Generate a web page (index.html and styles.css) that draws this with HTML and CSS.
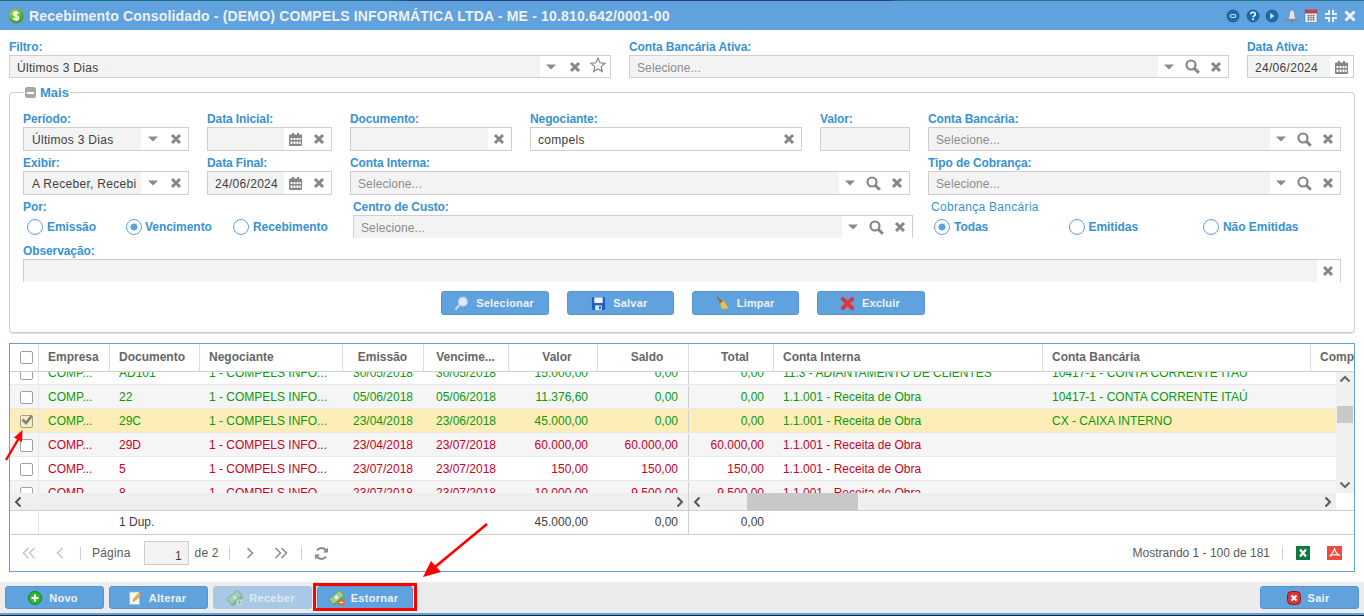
FILE: index.html
```html
<!DOCTYPE html>
<html lang="pt-BR">
<head>
<meta charset="utf-8">
<title>Recebimento Consolidado</title>
<link rel="stylesheet" href="styles.css">
</head>
<body>
<svg class="defs" width="0" height="0">
  <symbol id="x" viewBox="0 0 12 12"><path d="M2 2l8 8M10 2l-8 8" stroke="#868686" stroke-width="3" fill="none"/></symbol>
  <symbol id="caret" viewBox="0 0 10 6"><path d="M0 .5h10L5 5.500z" fill="#8a8a8a"/></symbol>
  <symbol id="search" viewBox="0 0 15 15"><circle cx="6" cy="6" r="4.500" stroke="#868686" stroke-width="2.200" fill="none"/><path d="M9 9l4.800 4.800" stroke="#868686" stroke-width="3"/></symbol>
  <symbol id="cal" viewBox="0 0 13 14"><path d="M0 3.500a1 1 0 0 1 1-1h2V1h2v1.500h3V1h2v1.500h2a1 1 0 0 1 1 1V13a1 1 0 0 1-1 1H1a1 1 0 0 1-1-1z" fill="#868686"/><path d="M1.500 6h2v2h-2zM4.500 6h2v2h-2zM7.500 6h2v2h-2zM10.300 6h1.500v2h-1.500zM1.500 9.500h2v2.500h-2zM4.500 9.500h2v2.500h-2zM7.500 9.500h2v2.500h-2zM10.300 9.500h1.500v2.500h-1.500z" fill="#fff"/></symbol>
  <symbol id="money" viewBox="0 0 18 18"><g transform="rotate(-40 9 9)"><rect x="1" y="7" width="16" height="8" fill="#6ea96a"/><rect x="1" y="4" width="16" height="8" fill="#9ccf93" stroke="#4f8f4f" stroke-width=".8"/><circle cx="9" cy="8" r="2" fill="#e6f4e0"/></g></symbol>
  <symbol id="chev-l" viewBox="0 0 10 12"><path d="M7.500 1.500L3 6l4.500 4.500" fill="none" stroke="#555" stroke-width="2"/></symbol>
  <symbol id="chev-r" viewBox="0 0 10 12"><path d="M2.500 1.500L7 6l-4.500 4.500" fill="none" stroke="#555" stroke-width="2"/></symbol>
  <symbol id="chev-u" viewBox="0 0 12 10"><path d="M1.500 7.500L6 3l4.500 4.500" fill="none" stroke="#666" stroke-width="2"/></symbol>
  <symbol id="chev-d" viewBox="0 0 12 10"><path d="M1.500 2.500L6 7l4.500-4.500" fill="none" stroke="#666" stroke-width="2"/></symbol>
  <symbol id="pg-first" viewBox="0 0 14 12"><path d="M6.500 1L1.500 6l5 5M12.500 1l-5 5 5 5" fill="none" stroke="#c4c4c4" stroke-width="1.500"/></symbol>
  <symbol id="pg-prev" viewBox="0 0 14 12"><path d="M9.500 1l-5 5 5 5" fill="none" stroke="#c4c4c4" stroke-width="1.500"/></symbol>
  <symbol id="pg-next" viewBox="0 0 14 12"><path d="M4.500 1l5 5-5 5" fill="none" stroke="#8a8a8a" stroke-width="1.500"/></symbol>
  <symbol id="pg-last" viewBox="0 0 14 12"><path d="M1.500 1l5 5-5 5M7.500 1l5 5-5 5" fill="none" stroke="#8a8a8a" stroke-width="1.500"/></symbol>
</svg>

<div class="strip"></div>
<header class="titlebar">
  <svg class="title-ico" viewBox="0 0 16 16"><defs><radialGradient id="gg" cx=".4" cy=".3" r=".8"><stop offset="0" stop-color="#a4e05a"/><stop offset="1" stop-color="#2e8b1e"/></radialGradient></defs><circle cx="8" cy="8" r="7.500" fill="url(#gg)"/><path d="M10.600 5.600C10.200 4.700 9.200 4.300 8 4.300c-1.500 0-2.500.7-2.500 1.800 0 2.400 5.200 1.300 5.200 3.800 0 1.100-1.100 1.800-2.700 1.800-1.400 0-2.400-.6-2.800-1.600M8 3v10" fill="none" stroke="#fff" stroke-width="1.500"/></svg>
  <h1 class="title">Recebimento Consolidado - (DEMO) COMPELS INFORMÁTICA LTDA - ME - 10.810.642/0001-00</h1>
  <div class="tools">
    <svg class="tool" viewBox="0 0 14 14"><circle cx="7" cy="7" r="6.500" fill="#1f69a8"/><rect x="4.300" y="5.500" width="5.400" height="3" rx="1.500" fill="none" stroke="#cfe3f5" stroke-width="1.200"/></svg>
    <svg class="tool" viewBox="0 0 14 14"><circle cx="7" cy="7" r="6.500" fill="#1f69a8"/><path d="M4.800 5.300C4.900 4 5.900 3.300 7 3.300c1.300 0 2.300.8 2.300 1.900 0 1.600-2.200 1.600-2.200 3.100" fill="none" stroke="#fff" stroke-width="1.600"/><rect x="6.200" y="9.400" width="1.800" height="1.700" fill="#fff"/></svg>
    <svg class="tool" viewBox="0 0 14 14"><circle cx="7" cy="7" r="6.500" fill="#1f69a8"/><path d="M5.200 4l4.300 3-4.300 3z" fill="#cfe3f5"/></svg>
    <svg class="tool" viewBox="0 0 14 14"><path d="M7 1c.8 0 1 .6 1 1 1.200.5 1.400 1.500 1.500 3 .1 2 .6 3.800 1.500 5H3c.9-1.200 1.400-3 1.500-5 .1-1.500.3-2.500 1.500-3 0-.4.200-1 1-1z" fill="#dfe6ec" stroke="#7f8d99" stroke-width=".6"/><rect x="1" y="10" width="12" height="1.800" rx=".9" fill="#7d8a96"/><circle cx="7" cy="12.700" r="1" fill="#6d7985"/></svg>
    <svg class="tool" viewBox="0 0 14 14"><rect x="1" y=".5" width="12" height="13" fill="#eef1f4" stroke="#6f7a85" stroke-width=".6"/><rect x="1" y=".5" width="12" height="4" fill="#b8434f"/><path d="M3 6.500h8M3 8.500h8M3 10.500h8M4.500 5.500v7M7 5.500v7M9.500 5.500v7" stroke="#7a8896" stroke-width=".8"/></svg>
    <svg class="tool" viewBox="0 0 14 14"><path d="M5 1v4H1M9 1v4h4M5 13V9H1M9 13V9h4" fill="none" stroke="#eaf2fa" stroke-width="2"/></svg>
    <svg class="tool" viewBox="0 0 14 14"><path d="M2.500 2.500l9 9M11.500 2.500l-9 9" stroke="#eaf2fa" stroke-width="3"/></svg>
  </div>
</header>

<main class="content">
  <section class="top-row">
    <div class="fld">
      <label class="lbl">Filtro:</label>
      <div class="inp"><span class="val">Últimos 3 Dias</span><span class="trig"><span class="slot"><svg class="i-caret"><use href="#caret"/></svg></span><span class="slot"><svg class="i-x"><use href="#x"/></svg></span><span class="slot"><svg class="i-star" viewBox="0 0 16 16"><path d="M8 1.200l2 4.600 5 .5-3.800 3.300 1.100 4.900L8 12l-4.300 2.500 1.100-4.900L1 6.300l5-.5z" fill="none" stroke="#868686" stroke-width="1.200"/></svg></span></span></div>
    </div>
    <div class="fld">
      <label class="lbl">Conta Bancária Ativa:</label>
      <div class="inp"><span class="val ph">Selecione...</span><span class="trig"><span class="slot"><svg class="i-caret"><use href="#caret"/></svg></span><span class="slot"><svg class="i-s"><use href="#search"/></svg></span><span class="slot"><svg class="i-x"><use href="#x"/></svg></span></span></div>
    </div>
    <div class="fld">
      <label class="lbl">Data Ativa:</label>
      <div class="inp"><span class="val">24/06/2024</span><span class="trig"><span class="slot"><svg class="i-c"><use href="#cal"/></svg></span></span></div>
    </div>
  </section>

  <fieldset class="more">
    <legend class="more-leg"><span class="minus"></span>Mais</legend>
    <div class="form-row">
      <div class="fld"><label class="lbl">Período:</label><div class="inp tall"><span class="val">Últimos 3 Dias</span><span class="trig"><span class="slot"><svg class="i-caret"><use href="#caret"/></svg></span><span class="slot"><svg class="i-x"><use href="#x"/></svg></span></span></div></div>
      <div class="fld"><label class="lbl">Data Inicial:</label><div class="inp tall"><span class="val"></span><span class="trig"><span class="slot"><svg class="i-c"><use href="#cal"/></svg></span><span class="slot"><svg class="i-x"><use href="#x"/></svg></span></span></div></div>
      <div class="fld"><label class="lbl">Documento:</label><div class="inp tall"><span class="val"></span><span class="trig"><span class="slot"><svg class="i-x"><use href="#x"/></svg></span></span></div></div>
      <div class="fld"><label class="lbl">Negociante:</label><div class="inp tall plain"><span class="val">compels</span><span class="trig"><span class="slot"><svg class="i-x"><use href="#x"/></svg></span></span></div></div>
      <div class="fld"><label class="lbl">Valor:</label><div class="inp tall"><span class="val"></span></div></div>
      <div class="fld"><label class="lbl">Conta Bancária:</label><div class="inp tall"><span class="val ph">Selecione...</span><span class="trig"><span class="slot"><svg class="i-caret"><use href="#caret"/></svg></span><span class="slot"><svg class="i-s"><use href="#search"/></svg></span><span class="slot"><svg class="i-x"><use href="#x"/></svg></span></span></div></div>
    </div>
    <div class="form-row">
      <div class="fld"><label class="lbl">Exibir:</label><div class="inp tall"><span class="val">A Receber, Recebi</span><span class="trig"><span class="slot"><svg class="i-caret"><use href="#caret"/></svg></span><span class="slot"><svg class="i-x"><use href="#x"/></svg></span></span></div></div>
      <div class="fld"><label class="lbl">Data Final:</label><div class="inp tall"><span class="val">24/06/2024</span><span class="trig"><span class="slot"><svg class="i-c"><use href="#cal"/></svg></span><span class="slot"><svg class="i-x"><use href="#x"/></svg></span></span></div></div>
      <div class="fld span3"><label class="lbl">Conta Interna:</label><div class="inp tall"><span class="val ph">Selecione...</span><span class="trig"><span class="slot"><svg class="i-caret"><use href="#caret"/></svg></span><span class="slot"><svg class="i-s"><use href="#search"/></svg></span><span class="slot"><svg class="i-x"><use href="#x"/></svg></span></span></div></div>
      <div class="fld"><label class="lbl">Tipo de Cobrança:</label><div class="inp tall"><span class="val ph">Selecione...</span><span class="trig"><span class="slot"><svg class="i-caret"><use href="#caret"/></svg></span><span class="slot"><svg class="i-s"><use href="#search"/></svg></span><span class="slot"><svg class="i-x"><use href="#x"/></svg></span></span></div></div>
    </div>
    <div class="radio-row">
      <div class="fld">
        <label class="lbl">Por:</label>
        <div class="radios por">
          <span class="radio"><i class="dot"></i>Emissão</span>
          <span class="radio on"><i class="dot"></i>Vencimento</span>
          <span class="radio"><i class="dot"></i>Recebimento</span>
        </div>
      </div>
      <div class="fld"><label class="lbl">Centro de Custo:</label><div class="inp cut"><span class="val ph">Selecione...</span><span class="trig"><span class="slot"><svg class="i-caret"><use href="#caret"/></svg></span><span class="slot"><svg class="i-s"><use href="#search"/></svg></span><span class="slot"><svg class="i-x"><use href="#x"/></svg></span></span></div></div>
      <div class="fld">
        <label class="lbl normal">Cobrança Bancária</label>
        <div class="radios cob">
          <span class="radio on"><i class="dot"></i>Todas</span>
          <span class="radio"><i class="dot"></i>Emitidas</span>
          <span class="radio"><i class="dot"></i>Não Emitidas</span>
        </div>
      </div>
    </div>
    <div class="obs">
      <label class="lbl">Observação:</label>
      <div class="inp cut"><span class="val"></span><span class="trig"><span class="slot"><svg class="i-x"><use href="#x"/></svg></span></span></div>
    </div>
    <div class="actions">
      <button class="btn act" type="button"><svg class="b-ico" viewBox="0 0 16 16"><circle cx="9.500" cy="6" r="4.700" fill="#dcebf7" stroke="#b9cfe0" stroke-width="1.300"/><path d="M6 9.500L1.500 14.500" stroke="#e3d9c4" stroke-width="2.200"/></svg>Selecionar</button>
      <button class="btn act" type="button"><svg class="b-ico" viewBox="0 0 16 16"><rect x="1" y="1" width="14" height="14" rx="1.500" fill="#1f5fc0"/><rect x="3.500" y="1.500" width="9" height="6" fill="#eef4fb"/><rect x="4.500" y="10" width="7" height="5" fill="#dfe5ec"/><rect x="8.500" y="11" width="2" height="3" fill="#1f5fc0"/></svg>Salvar</button>
      <button class="btn act" type="button"><svg class="b-ico" viewBox="0 0 16 16"><path d="M2 1l5 6" stroke="#a5622b" stroke-width="1.500"/><path d="M6 6l3-2 4 7 2 2-7 1-2-3z" fill="#e8c33f"/><path d="M5 7l3.500-2.500" stroke="#c0392b" stroke-width="1.300"/></svg>Limpar</button>
      <button class="btn act" type="button"><svg class="b-ico" viewBox="0 0 16 16"><path d="M3 3l10 10M13 3L3 13" stroke="#e0333b" stroke-width="4.200" stroke-linecap="round"/></svg>Excluir</button>
    </div>
  </fieldset>

  <section class="grid">
    <div class="g-row g-head">
      <div class="cell chk"><i class="box"></i></div>
      <div class="cell">Empresa</div>
      <div class="cell">Documento</div>
      <div class="cell">Negociante</div>
      <div class="cell ctr">Emissão</div>
      <div class="cell ctr">Vencime...</div>
      <div class="cell ctr sh">Valor</div>
      <div class="cell ctr sh">Saldo</div>
      <div class="cell ctr sh">Total</div>
      <div class="cell">Conta Interna</div>
      <div class="cell">Conta Bancária</div>
      <div class="cell comp">Comp</div>
    </div>
    <div class="g-body">
      <div class="rows">
        <div class="g-row row green first">
          <div class="cell chk"><i class="box"></i></div><div class="cell">COMP...</div><div class="cell">AD101</div><div class="cell">1 - COMPELS INFO...</div><div class="cell ctr">30/05/2018</div><div class="cell ctr">30/05/2018</div><div class="cell num">15.000,00</div><div class="cell num">0,00</div><div class="cell num">0,00</div><div class="cell">11.3 - ADIANTAMENTO DE CLIENTES</div><div class="cell">10417-1 - CONTA CORRENTE ITAÚ</div><div class="cell"></div>
        </div>
        <div class="g-row row green alt">
          <div class="cell chk"><i class="box"></i></div><div class="cell">COMP...</div><div class="cell">22</div><div class="cell">1 - COMPELS INFO...</div><div class="cell ctr">05/06/2018</div><div class="cell ctr">05/06/2018</div><div class="cell num">11.376,60</div><div class="cell num">0,00</div><div class="cell num">0,00</div><div class="cell">1.1.001 - Receita de Obra</div><div class="cell">10417-1 - CONTA CORRENTE ITAÚ</div><div class="cell"></div>
        </div>
        <div class="g-row row green sel">
          <div class="cell chk"><i class="box checked"><svg class="tick" viewBox="0 0 14 14"><path d="M2.500 6.500l3.500 3.500 6-7.500" fill="none" stroke="#808080" stroke-width="2.600"/></svg></i></div><div class="cell">COMP...</div><div class="cell">29C</div><div class="cell">1 - COMPELS INFO...</div><div class="cell ctr">23/04/2018</div><div class="cell ctr">23/06/2018</div><div class="cell num">45.000,00</div><div class="cell num">0,00</div><div class="cell num">0,00</div><div class="cell">1.1.001 - Receita de Obra</div><div class="cell">CX - CAIXA INTERNO</div><div class="cell"></div>
        </div>
        <div class="g-row row red alt">
          <div class="cell chk"><i class="box"></i></div><div class="cell">COMP...</div><div class="cell">29D</div><div class="cell">1 - COMPELS INFO...</div><div class="cell ctr">23/04/2018</div><div class="cell ctr">23/07/2018</div><div class="cell num">60.000,00</div><div class="cell num">60.000,00</div><div class="cell num">60.000,00</div><div class="cell">1.1.001 - Receita de Obra</div><div class="cell"></div><div class="cell"></div>
        </div>
        <div class="g-row row red">
          <div class="cell chk"><i class="box"></i></div><div class="cell">COMP...</div><div class="cell">5</div><div class="cell">1 - COMPELS INFO...</div><div class="cell ctr">23/07/2018</div><div class="cell ctr">23/07/2018</div><div class="cell num">150,00</div><div class="cell num">150,00</div><div class="cell num">150,00</div><div class="cell">1.1.001 - Receita de Obra</div><div class="cell"></div><div class="cell"></div>
        </div>
        <div class="g-row row red alt">
          <div class="cell chk"><i class="box"></i></div><div class="cell">COMP...</div><div class="cell">8</div><div class="cell">1 - COMPELS INFO...</div><div class="cell ctr">23/07/2018</div><div class="cell ctr">23/07/2018</div><div class="cell num">10.000,00</div><div class="cell num">9.500,00</div><div class="cell num">9.500,00</div><div class="cell">1.1.001 - Receita de Obra</div><div class="cell"></div><div class="cell"></div>
        </div>
      </div>
      <div class="vscroll">
        <svg class="sc-v"><use href="#chev-u"/></svg>
        <div class="v-thumb"></div>
        <svg class="sc-v"><use href="#chev-d"/></svg>
      </div>
    </div>
    <div class="hbars">
      <div class="hbar locked"><svg class="sc-h"><use href="#chev-l"/></svg><svg class="sc-h"><use href="#chev-r"/></svg></div>
      <div class="hbar free"><svg class="sc-h"><use href="#chev-l"/></svg><div class="h-thumb"></div><svg class="sc-h"><use href="#chev-r"/></svg></div>
      <div class="corner"></div>
    </div>
    <div class="g-row g-sum">
      <div class="cell chk"></div><div class="cell"></div><div class="cell sumtxt">1 Dup.</div><div class="cell"></div><div class="cell"></div><div class="cell"></div><div class="cell num">45.000,00</div><div class="cell num">0,00</div><div class="cell num">0,00</div><div class="cell"></div><div class="cell"></div><div class="cell"></div>
    </div>
    <div class="pager">
      <svg class="pg p1"><use href="#pg-first"/></svg>
      <svg class="pg p2"><use href="#pg-prev"/></svg>
      <i class="sep s1"></i>
      <span class="pg-txt">Página</span>
      <span class="pg-input">1</span>
      <span class="pg-txt">de 2</span>
      <i class="sep s2"></i>
      <svg class="pg p3"><use href="#pg-next"/></svg>
      <svg class="pg p4"><use href="#pg-last"/></svg>
      <i class="sep s3"></i>
      <svg class="pg-r" viewBox="0 0 16 16"><path d="M13.500 6.500A5.800 5.800 0 0 0 3.200 4.600M2.500 9.500a5.800 5.800 0 0 0 10.300 1.900" fill="none" stroke="#8a8a8a" stroke-width="2.200"/><path d="M15 1.500V7H9.500zM1 14.500V9h5.500z" fill="#8a8a8a"/></svg>
      <span class="pg-info">Mostrando 1 - 100 de 181</span>
      <i class="sep s4"></i>
      <svg class="pg-x" viewBox="0 0 14 14"><rect width="14" height="14" fill="#0f7a40"/><path d="M4 3.500l6 7M10 3.500l-6 7" stroke="#fff" stroke-width="2.200"/></svg>
      <svg class="pg-p" viewBox="0 0 15 14"><rect width="15" height="14" fill="#ee4b3c"/><path d="M7.500 2c-.6 3-2.200 6-5 8M7.500 2c.4 3 2.200 6 5.500 7.500M3 10c3-1.500 6-2 9.500-.8" fill="none" stroke="#fff" stroke-width="1.200"/></svg>
    </div>
  </section>
</main>

<footer class="bottom">
  <button class="btn foot" type="button"><svg class="f-ico" viewBox="0 0 14 14"><circle cx="7" cy="7" r="6.500" fill="#2fb52f" stroke="#17801c"/><path d="M7 3.500v7M3.500 7h7" stroke="#fff" stroke-width="2.200"/></svg>Novo</button>
  <button class="btn foot" type="button"><svg class="f-ico" viewBox="0 0 14 14"><rect x="1.500" y="1" width="10" height="12.500" fill="#f8f8f4" stroke="#a9b2ba" stroke-width=".8"/><path d="M5 10.500l1-3 5.500-6 2 2-6 5.500z" fill="#eeb64a" stroke="#b9772a" stroke-width=".6"/></svg>Alterar</button>
  <button class="btn foot off" type="button"><svg class="f-ico wide faded" viewBox="0 0 18 18"><use href="#money"/><circle cx="14" cy="14" r="3.500" fill="#d4e6d0"/><path d="M14 12v4M12 14h4" stroke="#7fae7d" stroke-width="1.300"/></svg>Receber</button>
  <button class="btn foot marked" type="button"><svg class="f-ico wide" viewBox="0 0 18 18"><use href="#money"/><circle cx="14" cy="14" r="3.700" fill="#e8662a"/><path d="M12 14h4" stroke="#fff" stroke-width="1.500"/></svg>Estornar</button>
  <button class="btn foot sair" type="button"><svg class="f-ico" viewBox="0 0 14 14"><rect x=".5" y=".5" width="13" height="13" rx="4" fill="#d9363a" stroke="#8c1a1d"/><path d="M4.500 4.500l5 5M9.500 4.500l-5 5" stroke="#fff" stroke-width="2.200"/></svg>Sair</button>
</footer>
<div class="endline"></div>

<svg class="notes" viewBox="0 0 1364 616">
  <path d="M6 460L19 438" stroke="#f00" stroke-width="2.400"/><path d="M22.500 430L14 437.500 22 442z" fill="#f00"/>
  <path d="M487 524L435 567" stroke="#f00" stroke-width="2.600"/><path d="M423 577L431 561 441 572z" fill="#f00"/>
</svg>
</body>
</html>
```

FILE: styles.css
```css
* { box-sizing: border-box; }
html, body { margin: 0; padding: 0; }
body {
  position: relative;
  width: 1364px;
  height: 616px;
  overflow: hidden;
  display: flex;
  flex-direction: column;
  font: 12px "Liberation Sans", Arial, sans-serif;
  color: #404040;
  background: #fff;
}
.defs { position: absolute; }
.strip {
  height: 1px;
  background: linear-gradient(90deg, #1d6d86 0, #1d6d86 29%, #243d7c 30%, #243d7c 65%, #1c7a8c 66%, #1c7a8c 100%);
  flex: none;
}
.titlebar {
  flex: none;
  height: 29px;
  background: #5fa2dd;
  display: flex;
  align-items: center;
  padding: 0 7px 0 8px;
}
.title-ico { width: 16px; height: 16px; flex: none; margin-right: 5px; }
.title {
  margin: 0;
  font-size: 14px;
  font-weight: 700;
  letter-spacing: .18px;
  color: #f0f0f0;
  white-space: nowrap;
  flex: 1;
}
.tools { display: flex; gap: 5.500px; align-items: center; }
.tool { width: 14px; height: 14px; display: block; }

.content {
  flex: 1;
  min-height: 0;
  padding: 8px 9px 10px 9px;
  display: flex;
  flex-direction: column;
}
.top-row { display: grid; grid-template-columns: 602px 600px 107px; column-gap: 18px; }
.lbl {
  display: block;
  height: 17px;
  padding-top: 1px;
  line-height: 16px;
  color: #3892d3;
  font-weight: 700;
  letter-spacing: -.1px;
  white-space: nowrap;
}
.lbl.normal { font-weight: 400; letter-spacing: .3px; }
.inp {
  height: 23px;
  border: 1px solid #cfcfcf;
  background: #fff;
  display: flex;
  align-items: stretch;
}
.inp.tall { height: 24px; }
.inp.cut { border-bottom: 0; }
.val {
  flex: 1;
  min-width: 0;
  background: #f3f3f3;
  padding: 1px 0 0 7px;
  line-height: 22px;
  letter-spacing: .3px;
  white-space: nowrap;
  overflow: hidden;
}
.form-row .fld:first-child .val { padding-left: 8px; }
.plain .val { background: #fff; }
.ph { color: #8c8c8c; letter-spacing: .1px; }
.trig { display: flex; flex: none; }
.slot { width: 23.500px; display: flex; align-items: center; justify-content: center; }
.i-x { width: 12px; height: 12px; display: block; }
.i-caret { width: 10px; height: 6px; display: block; }
.i-s { width: 15px; height: 15px; display: block; }
.i-c { width: 13px; height: 14px; display: block; }
.i-star { width: 16px; height: 16px; display: block; margin-top: -4px; }

.more {
  margin: 8px 0 0 0;
  width: 1345px;
  height: 247px;
  padding: 0 13px 0 13px;
  border: 1px solid #cfcfcf;
  border-radius: 4px;
  box-shadow: 0 1px 1px #ddd;
}
.more-leg {
  padding: 0 1px;
  margin-left: 1px;
  font-weight: 700;
  color: #3892d3;
  font-size: 13px;
  line-height: 13px;
  display: flex;
  align-items: center;
  gap: 4px;
}
.minus {
  width: 11px;
  height: 11px;
  border-radius: 2px;
  background: linear-gradient(#fff, #fff) center/7px 2px no-repeat #a8a8a8;
}
.form-row {
  display: grid;
  grid-template-columns: 166px 125px 162px 272px 90px 413px;
  column-gap: 18px;
  margin-bottom: 3px;
}
.form-row:first-of-type { margin-top: 11px; }
.span3 { grid-column: span 3; }
.radio-row { display: grid; grid-template-columns: 312px 560px 410px; column-gap: 18px; }
.radios { display: flex; height: 23px; align-items: center; color: #3892d3; font-weight: 700; letter-spacing: -.05px; }
.radio { display: flex; align-items: center; gap: 4px; white-space: nowrap; flex: none; }
.por { padding-left: 4px; }
.por .radio:nth-child(1) { width: 99px; }
.por .radio:nth-child(2) { width: 107px; gap: 3px; }
.cob { padding-left: 3px; }
.cob .radio { width: 134.500px; }
.dot {
  width: 16px;
  height: 16px;
  border-radius: 50%;
  border: 1.500px solid #5fa2dd;
  background: #fff;
  flex: none;
  position: relative;
}
.on .dot { background: radial-gradient(circle, #5fa2dd 0 3.300px, #fff 3.800px); }
.obs { margin-top: 4px; }
.actions { margin-top: 9px; display: flex; justify-content: center; gap: 17.830px; padding-left: 2px; }

.btn {
  border: 1px solid #5795cf;
  border-radius: 3px;
  background: #5fa2dd;
  color: #eef2f6;
  font: 700 11px "Liberation Sans", Arial, sans-serif;
  letter-spacing: .2px;
  height: 24px;
  padding: 0;
  display: flex;
  align-items: center;
  justify-content: center;
}
.act { width: 107.500px; padding-right: 2px; }
.b-ico { width: 15px; height: 15px; margin-right: 7px; flex: none; }

.grid {
  margin: 10px 0 0 0;
  flex: 1;
  min-height: 0;
  border: 1px solid #5fa2dd;
  display: flex;
  flex-direction: column;
  width: 1346px;
  overflow: hidden;
}
.g-row {
  display: grid;
  grid-template-columns: 29px 71px 90px 143px 81px 85px 89px 91px 85px 269px 268px 1fr;
}
.cell {
  padding: 0 9px;
  white-space: nowrap;
  overflow: hidden;
}
.ctr { text-align: center; padding: 0 1px 0 0; }
.num { text-align: right; padding-right: 10px; }
.g-head {
  flex: none;
  height: 28px;
  line-height: 26px;
  color: #666;
  font-weight: 700;
  border-bottom: 1px solid #cfcfcf;
  background: #fff;
}
.g-head .cell { border-right: 1px solid #dcdcdc; }
.g-head .cell:last-child { border-right: 0; }
.g-head .sh { padding-left: 9px; }
.g-head .comp { padding-right: 0; }
.chk { padding: 0 0 0 4px; display: flex; align-items: center; justify-content: center; border-right: 1px solid #e6e6e6; }
.box {
  width: 13px;
  height: 13px;
  border: 1.500px solid #a0a0a0;
  border-radius: 2px;
  background: #fff;
  display: block;
  position: relative;
}
.checked { background: transparent; }
.tick { position: absolute; left: -1px; top: -3px; width: 14px; height: 14px; }
.g-body { flex: none; height: 121px; display: flex; }
.rows { width: 1326px; overflow: hidden; flex: none; }
.row {
  height: 24px;
  padding-top: 1px;
  line-height: 22px;
  border-bottom: 1px solid #e8e8e8;
  background: #fff;
}
.row .cell:nth-child(8) { border-right: 1px solid #d0d0d0; }
.first { margin-top: -11px; }
.alt { background: #f5f5f5; }
.sel { background: #fdeeb9; }
.green { color: #0a9a0a; }
.red { color: #c8001e; }
.vscroll {
  width: 18px;
  flex: none;
  background: #f0f0f0;
  display: flex;
  flex-direction: column;
  align-items: center;
}
.sc-v { width: 12px; height: 10px; display: block; margin-top: 2px; }
.sc-v:last-child { margin-top: auto; margin-bottom: 3px; }
.v-thumb { width: 16px; height: 17px; background: #c8c8c8; margin-top: 22px; }
.hbars { flex: none; height: 18px; display: flex; border-bottom: 1px solid #cfcfcf; }
.hbar { background: #efefef; display: flex; align-items: center; justify-content: space-between; padding: 0 3px; }
.locked { width: 679px; border-right: 1px solid #d0d0d0; }
.free { width: 647px; }
.sc-h { width: 10px; height: 12px; display: block; flex: none; }
.h-thumb { width: 111px; height: 100%; background: #c8c8c8; margin-left: 45px; margin-right: auto; }
.corner { flex: 1; background: #fff; }
.g-sum {
  flex: none;
  height: 24px;
  line-height: 23px;
  border-bottom: 1px solid #cfcfcf;
}
.g-sum .chk { border-right: 1px solid #e6e6e6; }
.g-sum .cell:nth-child(8) { border-right: 1px solid #d0d0d0; }
.sumtxt { overflow: visible; }
.pager {
  flex: 1;
  display: flex;
  align-items: center;
  padding: 0 12px 0 12px;
  color: #595959;
}
.pg { width: 14px; height: 12px; display: block; flex: none; }
.p2 { margin-left: 17px; }
.sep { width: 1px; height: 13px; background: #cfcfcf; display: block; flex: none; }
.s1 { margin-left: 13px; }
.pg-txt { margin-left: 11px; letter-spacing: .2px; }
.pg-input {
  width: 45px;
  height: 24px;
  margin-left: 13px;
  border: 1px solid #cfcfcf;
  background: #f3f3f3;
  text-align: right;
  padding: 5px 6px 0 0;
  line-height: 18px;
  margin-right: -5px;
  color: #404040;
}
.s2 { margin-left: 10px; }
.p3 { margin-left: 13px; }
.p4 { margin-left: 17px; }
.s3 { margin-left: 13px; }
.pg-r { width: 15px; height: 15px; display: block; margin-left: 12px; flex: none; }
.pg-info { margin-left: auto; }
.s4 { margin-left: 12px; }
.pg-x { width: 14px; height: 14px; margin-left: 13px; flex: none; }
.pg-p { width: 15px; height: 14px; margin-left: 17px; flex: none; }

.bottom {
  flex: none;
  height: 31px;
  background: #ececec;
  display: flex;
  align-items: center;
  padding: 0 5px;
  gap: 5px;
}
.foot { width: 99px; height: 23px; letter-spacing: .3px; padding-right: 3px; }
.off { background: #a8c8e6; border-color: #a8c8e6; color: #dfe9f2; }
.faded { opacity: .6; }
.marked { position: relative; width: 96px; }
.marked::after {
  content: "";
  position: absolute;
  left: -5px;
  right: -5px;
  top: -4px;
  bottom: -3px;
  border: 3px solid #f00;
}
.sair { margin-left: auto; }
.f-ico { width: 14px; height: 14px; margin-right: 7px; flex: none; }
.f-ico.wide { width: 16px; height: 16px; margin-right: 6px; }
.endline { flex: none; height: 3px; background: linear-gradient(#5fa2dd 0 2px, #1b2733 2px); }
.notes { position: absolute; left: 0; top: 0; width: 1364px; height: 616px; pointer-events: none; }
```
